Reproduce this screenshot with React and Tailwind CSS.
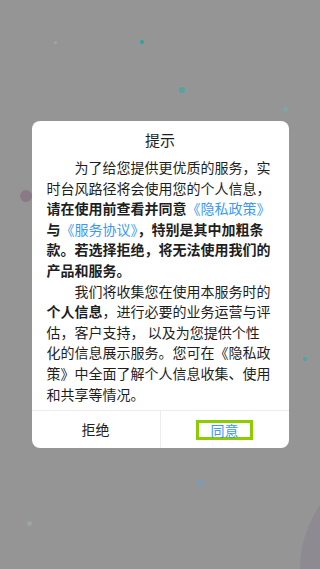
import React from 'react';

function App() {
    const blue = 'text-[#3b99f2]';
    return (
        <div
            className="relative w-[320px] h-[569px] overflow-hidden bg-[#959595] flex items-start justify-center pt-[121px]"
            style={{ fontFamily: '"Noto Sans CJK SC", "Noto Sans", sans-serif' }}
        >
            {/* background specks */}
            <span className="absolute left-[140px] top-[40px] w-[4px] h-[4px] rounded-full bg-[#2aa3a3]" />
            <span className="absolute left-[179px] top-[87px] w-[6px] h-[6px] rounded-full bg-[#44a8a8] opacity-80" />
            <span className="absolute left-[283px] top-[107px] w-[5px] h-[5px] rounded-full bg-[#6fb0b0] opacity-60" />
            <span className="absolute left-[54px] top-[41px] w-[3px] h-[3px] rounded-full bg-[#a8b0b0] opacity-60" />
            <span className="absolute left-[20px] top-[190px] w-[12px] h-[12px] rounded-full bg-[#8a7a86]" />
            <span className="absolute left-[303px] top-[357px] w-[4px] h-[4px] rounded-full bg-[#4aa4a8]" />
            <span className="absolute left-[197px] top-[479px] w-[7px] h-[7px] rounded-full bg-[#6fa2c0] opacity-60" />
            <span className="absolute left-[27px] top-[521px] w-[5px] h-[5px] rounded-full bg-[#9cb0b0] opacity-60" />
            <span className="absolute left-[300px] top-[457px] w-[224px] h-[224px] rounded-full bg-[#8d8a91]" />

            {/* Dialog */}
            <div className="relative w-[257px] bg-white rounded-[8px] text-[#1e1e1e]">
                <div className="pt-[8px] px-[15px] pb-[6px]">
                    <h1 className="text-center text-[15px] leading-[22px] mb-[6px]">提示</h1>
                    <div className="text-[14px] leading-[20.6px]">
                        <p className="indent-[28px]">
                            为了给您提供更优质的服务，实时台风路径将会使用您的个人信息，
                            <b className="font-bold">请在使用前查看并同意</b>
                            <span className={blue}>《隐私政策》</span>
                            <b className="font-bold">与</b>
                            <span className={blue}>《服务协议》</span>
                            <b className="font-bold">，特别是其中加粗条款。若选择拒绝，将无法使用我们的产品和服务。</b>
                        </p>
                        <p className="indent-[28px]">
                            我们将收集您在使用本服务时的<b className="font-bold">个人信息</b>，进行必要的业务运营与评估，客户支持， 以及为您提供个性化的信息展示服务。您可在《隐私政策》中全面了解个人信息收集、使用和共享等情况。
                        </p>
                    </div>
                </div>

                {/* Buttons */}
                <div className="flex h-[38px] border-t border-[#ececec] text-[14px]">
                    <button className="flex-1 flex items-center justify-center text-[#1e1e1e] border-r border-[#ececec]">
                        拒绝
                    </button>
                    <div className="flex-1 flex items-center justify-center">
                        <button className="w-[57px] h-[20px] border-[3px] border-[#8ccc00] flex items-center justify-center text-[#3b99f2] leading-none">
                            同意
                        </button>
                    </div>
                </div>
            </div>
        </div>
    );
}

export default App;
